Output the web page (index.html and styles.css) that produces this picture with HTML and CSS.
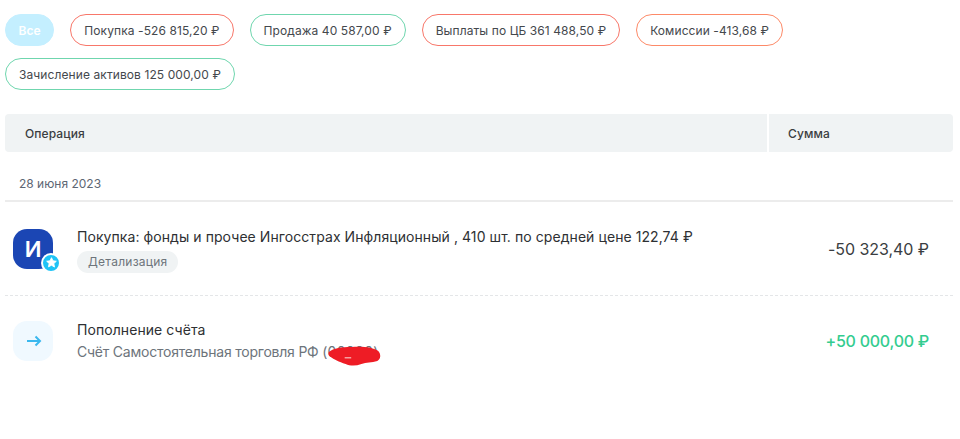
FILE: index.html
```html
<!DOCTYPE html>
<html lang="en">
<head>
    <meta charset="UTF-8">
    <title>Операции</title>
    <link rel="stylesheet" href="styles.css">
</head>
<body>
<div class="page">
    <div class="chips">
        <span class="chip chip-all">Все</span>
        <span class="chip chip-red">Покупка -526 815,20 ₽</span>
        <span class="chip chip-green">Продажа 40 587,00 ₽</span>
        <span class="chip chip-red">Выплаты по ЦБ 361 488,50 ₽</span>
        <span class="chip chip-orange">Комиссии -413,68 ₽</span>
        <span class="chip chip-green">Зачисление активов 125 000,00 ₽</span>
    </div>

    <div class="table-head">
        <div class="head-cell head-op">Операция</div>
        <div class="head-cell head-sum">Сумма</div>
    </div>

    <div class="date">28 июня 2023</div>

    <div class="row row-first">
        <div class="logo">
            <span class="logo-letter">И</span>
            <span class="logo-badge">
                <svg width="11" height="11" viewBox="0 0 24 24"><path fill="#fff" d="M12 1.5l3.2 6.9 7.3.9-5.4 5.1 1.4 7.5L12 17.9l-6.5 3.6 1.4-7.5L1.5 9.3l7.3-.9z" stroke="#fff" stroke-width="2" stroke-linejoin="round"/></svg>
            </span>
        </div>
        <div class="info">
            <div class="title">Покупка: фонды и прочее Ингосстрах Инфляционный , 410 шт. по средней цене 122,74 ₽</div>
            <span class="detail">Детализация</span>
        </div>
        <div class="amount">-50 323,40 ₽</div>
    </div>

    <div class="row row-second">
        <div class="logo logo-light">
            <svg width="16" height="12" viewBox="0 0 16 12"><path d="M1 6h13M9.500 1.500L14 6l-4.500 4.500" fill="none" stroke="#3bb8ee" stroke-width="2"/></svg>
        </div>
        <div class="info">
            <div class="title">Пополнение счёта</div>
            <div class="sub">Счёт Самостоятельная торговля РФ <span class="hidden-no">(00000)<svg class="scribble" width="56" height="22" viewBox="0 0 60 22" preserveAspectRatio="none"><path fill="#ee1c25" d="M3 7C8 3 17 2 27 2c11-1 24 0 29 4 3 3 3 8-1 10-6 2-12 1-17 3-6 2-12 2-17 0C14 17 8 14 5 12 3 11 2 9 3 7z"/><path fill="#f7a0a0" d="M20 12h7v1.500h-7z"/></svg></span></div>
        </div>
        <div class="amount amount-plus">+50 000,00 ₽</div>
    </div>
</div>
</body>
</html>
```

FILE: styles.css
```css
*{
    margin: 0;
    padding: 0;
    box-sizing: border-box;
}
body{
    background: #fff;
    font-family: Inter, "Noto Sans", sans-serif;
    color: #333;
}
.page{
    width: 960px;
    height: 439px;
    padding: 14px 7px 0 5px;
    overflow: hidden;
}
.chips{
    display: flex;
    flex-wrap: wrap;
    gap: 12px 16px;
}
.chip{
    display: flex;
    align-items: center;
    height: 32px;
    padding: 0 13px;
    border: 1px solid;
    border-radius: 16px;
    font-size: 12px;
    letter-spacing: 0.09px;
    color: #44484d;
    white-space: nowrap;
}
.chip-all{
    padding: 0 12.500px;
    border-color: #c4efff;
    background: #c4efff;
    color: #fff;
    font-weight: 600;
}
.chip-red{
    border-color: #f8776a;
}
.chip-green{
    border-color: #6fd6ae;
}
.chip-orange{
    border-color: #fd8a68;
}
.table-head{
    display: flex;
    gap: 2px;
    margin-top: 24px;
    height: 38px;
}
.head-cell{
    display: flex;
    align-items: center;
    background: #f0f3f4;
    font-size: 12px;
    font-weight: 500;
    letter-spacing: 0.1px;
    color: #3a3d41;
}
.head-op{
    width: 762px;
    padding-left: 20px;
    border-radius: 4px 0 0 4px;
}
.head-sum{
    width: 184px;
    padding-left: 19px;
    border-radius: 0 4px 4px 0;
}
.date{
    height: 50px;
    padding: 24px 0 0 14px;
    border-bottom: 2px solid #ececec;
    font-size: 12px;
    line-height: 16px;
    color: #5d6673;
}
.row{
    display: flex;
    align-items: center;
    padding: 0 24px 0 8px;
}
.row-first{
    height: 94px;
    border-bottom: 1px dashed #e4e6e8;
}
.row-first .info{
    padding-top: 3px;
}
.row-second{
    height: 90px;
}
.logo{
    position: relative;
    display: flex;
    align-items: center;
    justify-content: center;
    flex: none;
    width: 40px;
    height: 40px;
    border-radius: 14px;
    background: #1b46b4;
}
.logo-light{
    background: #f0f9ff;
    padding-left: 2px;
}
.logo-letter{
    font-size: 22px;
    font-weight: 600;
    color: #fff;
}
.logo-badge{
    position: absolute;
    right: -8px;
    bottom: -4px;
    display: flex;
    align-items: center;
    justify-content: center;
    width: 20px;
    height: 20px;
    border: 2px solid #fff;
    border-radius: 50%;
    background: #1fc3f6;
}
.info{
    flex: 1;
    margin-left: 24px;
}
.title{
    font-size: 14px;
    line-height: 18px;
    letter-spacing: 0.07px;
    color: #2e3033;
}
.detail{
    display: inline-block;
    margin-top: 5px;
    padding: 0 11px;
    height: 22px;
    border-radius: 11px;
    background: #f0f3f4;
    font-size: 12px;
    line-height: 22px;
    letter-spacing: 0.25px;
    color: #6d747b;
}
.sub{
    margin-top: 4px;
    font-size: 14px;
    line-height: 18px;
    letter-spacing: -0.22px;
    color: #6d747b;
}
.hidden-no{
    position: relative;
    letter-spacing: 0.3px;
}
.scribble{
    position: absolute;
    left: 4px;
    top: 2px;
}
.amount{
    font-size: 16px;
    letter-spacing: -0.05px;
    color: #3a3d41;
    white-space: nowrap;
}
.amount-plus{
    font-weight: 500;
    letter-spacing: -0.25px;
    color: #33cc8f;
}
```
